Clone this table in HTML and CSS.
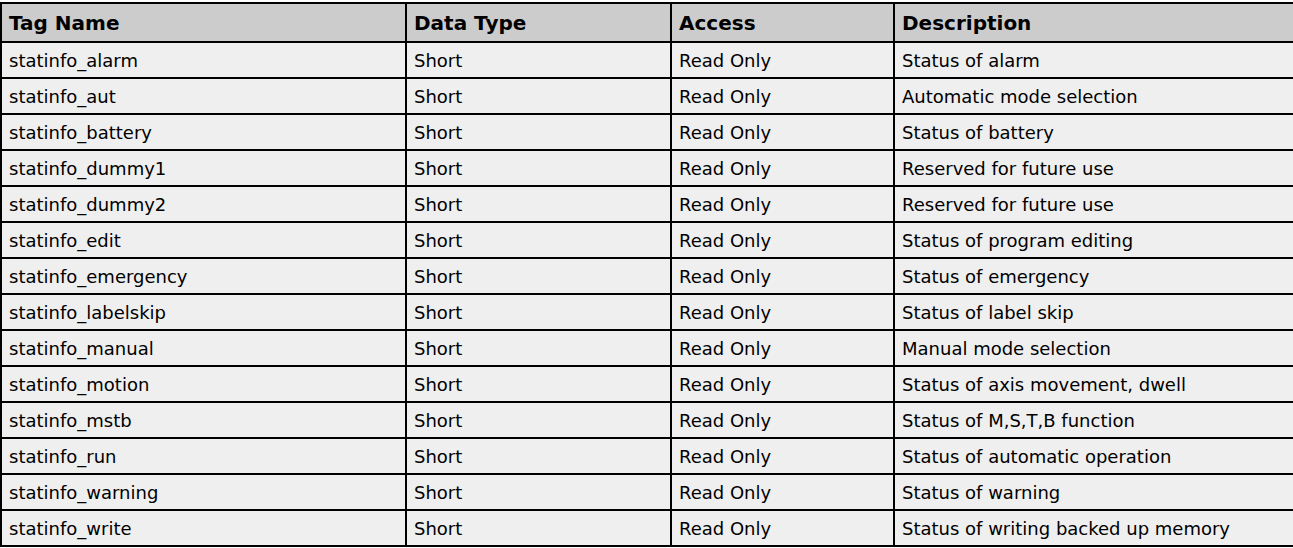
FILE: index.html
```html
<!DOCTYPE html>
<html lang="en">
<head>
<meta charset="utf-8">
<title>Tags</title>
<link rel="stylesheet" href="styles.css">
</head>
<body>
<table class="tags">
  <colgroup>
    <col class="c-name">
    <col class="c-type">
    <col class="c-access">
    <col class="c-desc">
  </colgroup>
  <thead>
    <tr><th>Tag Name</th><th>Data Type</th><th>Access</th><th>Description</th></tr>
  </thead>
  <tbody>
    <tr><td>statinfo_alarm</td><td>Short</td><td>Read Only</td><td>Status of alarm</td></tr>
    <tr><td>statinfo_aut</td><td>Short</td><td>Read Only</td><td>Automatic mode selection</td></tr>
    <tr><td>statinfo_battery</td><td>Short</td><td>Read Only</td><td>Status of battery</td></tr>
    <tr><td>statinfo_dummy1</td><td>Short</td><td>Read Only</td><td>Reserved for future use</td></tr>
    <tr><td>statinfo_dummy2</td><td>Short</td><td>Read Only</td><td>Reserved for future use</td></tr>
    <tr><td>statinfo_edit</td><td>Short</td><td>Read Only</td><td>Status of program editing</td></tr>
    <tr><td>statinfo_emergency</td><td>Short</td><td>Read Only</td><td>Status of emergency</td></tr>
    <tr><td>statinfo_labelskip</td><td>Short</td><td>Read Only</td><td>Status of label skip</td></tr>
    <tr><td>statinfo_manual</td><td>Short</td><td>Read Only</td><td>Manual mode selection</td></tr>
    <tr><td>statinfo_motion</td><td>Short</td><td>Read Only</td><td>Status of axis movement, dwell</td></tr>
    <tr><td>statinfo_mstb</td><td>Short</td><td>Read Only</td><td>Status of M,S,T,B function</td></tr>
    <tr><td>statinfo_run</td><td>Short</td><td>Read Only</td><td>Status of automatic operation</td></tr>
    <tr><td>statinfo_warning</td><td>Short</td><td>Read Only</td><td>Status of warning</td></tr>
    <tr><td>statinfo_write</td><td>Short</td><td>Read Only</td><td>Status of writing backed up memory</td></tr>
  </tbody>
</table>
</body>
</html>
```

FILE: styles.css
```css
html, body {
  margin: 0;
  padding: 0;
  background: #ffffff;
  overflow: hidden;
}
body {
  padding-top: 2px;
  font-family: "DejaVu Sans", Verdana, sans-serif;
  color: #000000;
}
.tags {
  border-collapse: separate;
  border-spacing: 0;
  table-layout: fixed;
  width: 1298px;
  border-right: 2px solid #000;
  border-bottom: 2px solid #000;
}
.c-name { width: 405px; }
.c-type { width: 265px; }
.c-access { width: 223px; }
.c-desc { width: 405px; }
.tags th,
.tags td {
  box-sizing: border-box;
  border-left: 2px solid #000;
  border-top: 2px solid #000;
  padding: 0 0 0 7px;
  text-align: left;
  white-space: nowrap;
  vertical-align: middle;
}
.tags th {
  background: #cccccc;
  font-size: 20px;
  font-weight: bold;
  height: 39px;
}
.tags td {
  background: #efefef;
  font-size: 18px;
  height: 36px;
}
```
